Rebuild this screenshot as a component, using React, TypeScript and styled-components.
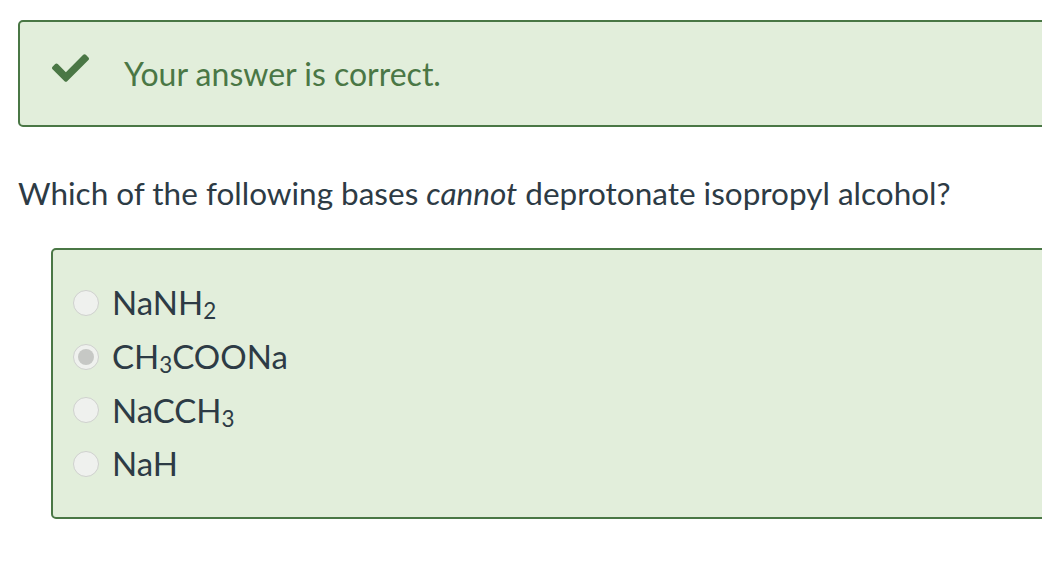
import React from "react";
import styled, { createGlobalStyle } from "styled-components";

const GlobalStyle = createGlobalStyle`
  html, body {
    margin: 0;
    padding: 0;
    background: #ffffff;
    overflow: hidden;
  }
  body {
    font-family: Lato, "Noto Sans", sans-serif;
    color: #2d3b45;
  }
`;

interface Choice {
  id: string;
  text: string;
  sub?: { index: number; value: string };
  selected?: boolean;
}

const choices: Choice[] = [
  { id: "a", text: "NaNH", sub: { index: 4, value: "2" } },
  { id: "b", text: "CHCOONa", sub: { index: 2, value: "3" }, selected: true },
  { id: "c", text: "NaCCH", sub: { index: 5, value: "3" } },
  { id: "d", text: "NaH" },
];

const renderFormula = (c: Choice) => {
  if (!c.sub) return c.text;
  const { index, value } = c.sub;
  return (
    <>
      {c.text.slice(0, index)}
      <Sub>{value}</Sub>
      {c.text.slice(index)}
    </>
  );
};

const App = () => {
  return (
    <Page>
      <GlobalStyle />
      <Feedback>
        <CheckIcon viewBox="0 65 512 381" aria-hidden>
          <path d="M173.9 439.4l-166.4-166.4c-10-10-10-26.2 0-36.2l36.2-36.2c10-10 26.2-10 36.2 0L192 312.7 432.1 72.6c10-10 26.2-10 36.2 0l36.2 36.2c10 10 10 26.2 0 36.2l-294.4 294.4c-10 10-26.2 10-36.2 0z" />
        </CheckIcon>
        <FeedbackText>Your answer is correct.</FeedbackText>
      </Feedback>

      <Question>
        Which of the following bases <em>cannot</em> deprotonate isopropyl
        alcohol?
      </Question>

      <Answers>
        {choices.map((c) => (
          <AnswerRow key={c.id}>
            <Radio $selected={c.selected} />
            <AnswerLabel>{renderFormula(c)}</AnswerLabel>
          </AnswerRow>
        ))}
      </Answers>
    </Page>
  );
};

export default App;

// ── Styles ──────────────────────────────────────────────────────────

const Page = styled.div`
  padding: 20px 0 0 18px;
  width: 1200px;
`;

const Feedback = styled.div`
  display: flex;
  align-items: center;
  box-sizing: border-box;
  width: 1100px;
  height: 107px;
  padding-left: 32px;
  background: #e2eedb;
  border: 2px solid #4a7745;
  border-radius: 5px;
`;

const CheckIcon = styled.svg`
  flex: none;
  width: 37px;
  height: 28px;
  margin-top: -11px;
  fill: #4a7745;
`;

const FeedbackText = styled.span`
  margin-left: 35px;
  font-size: 32px;
  line-height: 1;
  color: #4a7745;
`;

const Question = styled.p`
  margin: 46px 0 0 0;
  font-size: 31.5px;
  line-height: 40px;
  color: #2d3b45;

  em {
    font-style: italic;
  }
`;

const Answers = styled.div`
  display: flex;
  flex-direction: column;
  box-sizing: border-box;
  margin: 35px 0 0 33px;
  width: 1100px;
  height: 271px;
  padding: 26px 0 0 20px;
  background: #e2eedb;
  border: 2px solid #4a7745;
  border-radius: 5px;
`;

const AnswerRow = styled.div`
  display: flex;
  align-items: center;
  height: 53.7px;
`;

const Radio = styled.span<{ $selected?: boolean }>`
  position: relative;
  flex: none;
  box-sizing: border-box;
  width: 26px;
  height: 26px;
  border-radius: 50%;
  background: #eff1ee;
  border: 1.5px solid #cfd1ce;

  &::after {
    content: "";
    display: ${(p) => (p.$selected ? "block" : "none")};
    position: absolute;
    inset: 4px;
    border-radius: 50%;
    background: #c6c8c5;
  }
`;

const AnswerLabel = styled.span`
  margin-left: 13px;
  font-size: 33px;
  line-height: 1;
  color: #2d3b45;
`;

const Sub = styled.sub`
  font-size: 0.68em;
  vertical-align: -0.2em;
  line-height: 0;
`;
